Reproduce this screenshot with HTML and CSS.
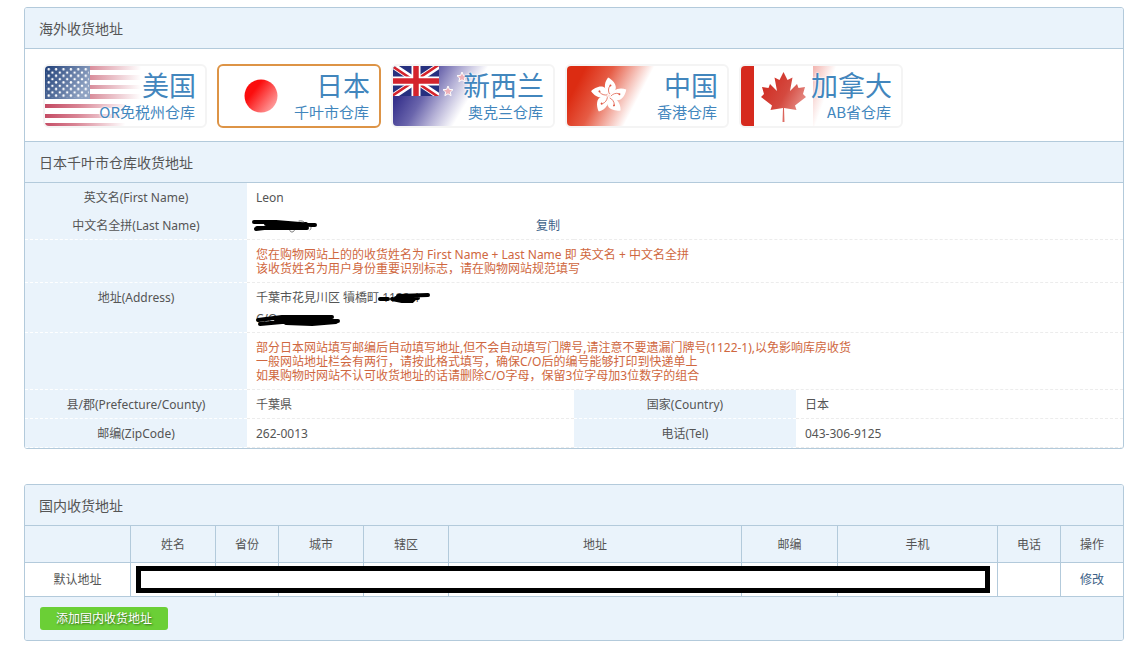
FILE: index.html
```html
<!DOCTYPE html>
<html lang="zh-CN">
<head>
    <meta charset="UTF-8">
    <meta name="viewport" content="width=device-width, initial-scale=1.0">
    <title>收货地址</title>
    <link rel="stylesheet" href="styles.css">
</head>
<body>
    <!-- Overseas addresses -->
    <section class="panel">
        <h2 class="panel-title">海外收货地址</h2>

        <div class="warehouses">
            <button type="button" class="warehouse">
                <svg class="flag" viewBox="0 0 160 60" aria-hidden="true">
                    <defs>
                        <linearGradient id="usBlue" x1="0" y1="0" x2="1" y2="0.4">
                            <stop offset="0" stop-color="#1f3f78"/>
                            <stop offset="1" stop-color="#8fa2c2"/>
                        </linearGradient>
                        <linearGradient id="usRed" gradientUnits="userSpaceOnUse" x1="0" y1="45" x2="80" y2="60">
                            <stop offset="0" stop-color="#c44a63"/>
                            <stop offset="0.4" stop-color="#d98595"/>
                            <stop offset="1" stop-color="#fff"/>
                        </linearGradient>
                        <linearGradient id="usTop" gradientUnits="userSpaceOnUse" x1="45" y1="0" x2="96" y2="0">
                            <stop offset="0" stop-color="#d98d9b"/>
                            <stop offset="1" stop-color="#fff"/>
                        </linearGradient>
                        <pattern id="usStars" width="7.4" height="6.6" patternUnits="userSpaceOnUse">
                            <circle cx="3.7" cy="3.2" r="1.2" fill="#fff"/>
                            <circle cx="0" cy="0" r="1.2" fill="#fff"/>
                            <circle cx="7.4" cy="0" r="1.2" fill="#fff"/>
                            <circle cx="0" cy="6.6" r="1.2" fill="#fff"/>
                            <circle cx="7.4" cy="6.6" r="1.2" fill="#fff"/>
                        </pattern>
                    </defs>
                    <path fill="url(#usTop)" d="M45 0H96V4H45zM45 9H96V14H45zM45 19H96V23H45zM45 28H96V33H45z"/>
                    <path fill="url(#usRed)" d="M0 38H96V42H0zM0 48H96V52H0zM0 57H96V60H0z"/>
                    <path fill="url(#usBlue)" d="M0 0H45V33H0z"/>
                    <path fill="url(#usStars)" d="M1 2H44V32H1z"/>
                </svg>
                <span class="warehouse-text">
                    <span class="country">美国</span>
                    <span class="depot">OR免税州仓库</span>
                </span>
            </button>

            <button type="button" class="warehouse active">
                <svg class="flag" viewBox="0 0 160 60" aria-hidden="true">
                    <defs>
                        <linearGradient id="jpRed" x1="0.1" y1="0.2" x2="1" y2="0.9">
                            <stop offset="0.2" stop-color="#fb0d0d"/>
                            <stop offset="1" stop-color="#ffb3b3"/>
                        </linearGradient>
                    </defs>
                    <circle cx="42" cy="30" r="16.5" fill="url(#jpRed)"/>
                </svg>
                <span class="warehouse-text">
                    <span class="country">日本</span>
                    <span class="depot">千叶市仓库</span>
                </span>
            </button>

            <button type="button" class="warehouse">
                <svg class="flag" viewBox="0 0 160 60" aria-hidden="true">
                    <defs>
                        <linearGradient id="nzBlue" gradientUnits="userSpaceOnUse" x1="6" y1="28" x2="60" y2="60">
                            <stop offset="0" stop-color="#37328c"/>
                            <stop offset="0.35" stop-color="#6a65ac"/>
                            <stop offset="0.65" stop-color="#b3afd5"/>
                            <stop offset="1" stop-color="#fff"/>
                        </linearGradient>
                        <clipPath id="nzJack"><path d="M0 0H46V30H0z"/></clipPath>
                    </defs>
                    <path fill="url(#nzBlue)" d="M0 0H110V60H0z"/>
                    <g clip-path="url(#nzJack)">
                        <path fill="#26307f" d="M0 0H46V30H0z"/>
                        <path stroke="#fff" stroke-width="6" d="M-1 -1L47 31M47 -1L-1 31"/>
                        <path stroke="#d4232c" stroke-width="2.500" d="M-1 0L47 32M47 -2L-1 30"/>
                        <path stroke="#fff" stroke-width="9" d="M23 0V30M0 15H46"/>
                        <path stroke="#d4232c" stroke-width="5.500" d="M23 0V30M0 15H46"/>
                    </g>
                    <g fill="#efb0b8" stroke="#fff" stroke-width="1">
                        <path d="M55 20l1.400 3.400 3.600.3-2.700 2.400.8 3.600-3.100-1.900-3.100 1.900.8-3.600-2.700-2.400 3.600-.3z"/>
                        <path d="M69 6l1.400 3.400 3.600.3-2.700 2.400.8 3.600-3.100-1.900-3.100 1.900.8-3.600-2.700-2.400 3.600-.3z"/>
                    </g>
                </svg>
                <span class="warehouse-text">
                    <span class="country">新西兰</span>
                    <span class="depot">奥克兰仓库</span>
                </span>
            </button>

            <button type="button" class="warehouse">
                <svg class="flag" viewBox="0 0 160 60" aria-hidden="true">
                    <defs>
                        <linearGradient id="hkRed" gradientUnits="userSpaceOnUse" x1="12" y1="14" x2="66" y2="42">
                            <stop offset="0" stop-color="#dc2c12"/>
                            <stop offset="0.4" stop-color="#e65c45"/>
                            <stop offset="1" stop-color="#fff"/>
                        </linearGradient>
                        <g id="petal">
                            <path fill="#fff" d="M0 0C-6 -4 -9 -10 -6 -17.500C-2 -17 5 -13 4.500 -8C4 -5 1 -4 0 0z"/>
                            <path fill="none" stroke="#df5540" stroke-width="0.7" d="M0 -2C-2 -4 -3 -7 -2 -10"/>
                            <circle cx="-1.500" cy="-10.500" r="1" fill="#df5540"/>
                        </g>
                    </defs>
                    <path fill="url(#hkRed)" d="M0 0H100V60H0z"/>
                    <g transform="translate(42 30) rotate(16)">
                        <use href="#petal"/>
                        <use href="#petal" transform="rotate(72)"/>
                        <use href="#petal" transform="rotate(144)"/>
                        <use href="#petal" transform="rotate(216)"/>
                        <use href="#petal" transform="rotate(288)"/>
                    </g>
                </svg>
                <span class="warehouse-text">
                    <span class="country">中国</span>
                    <span class="depot">香港仓库</span>
                </span>
            </button>

            <button type="button" class="warehouse">
                <svg class="flag" viewBox="0 0 160 60" aria-hidden="true">
                    <defs>
                        <linearGradient id="caLeaf" x1="0" y1="0.2" x2="1" y2="0.8">
                            <stop offset="0" stop-color="#d02a20"/>
                            <stop offset="0.5" stop-color="#d4493f"/>
                            <stop offset="1" stop-color="#eba19b"/>
                        </linearGradient>
                        <linearGradient id="caSide" gradientUnits="userSpaceOnUse" x1="64" y1="0" x2="92" y2="10">
                            <stop offset="0" stop-color="#ee9a93"/>
                            <stop offset="1" stop-color="#fff"/>
                        </linearGradient>
                    </defs>
                    <path fill="#d62a1e" d="M0 0H13V60H0z"/>
                    <path fill="url(#caSide)" d="M72 0H110V60H72z"/>
                    <path fill="url(#caLeaf)" d="M42.500 6L38.500 14L33.500 11.500L36 25L29 18L27.500 22L21 21L23 28L20 31L31 39.500L29.500 44L42 42L41.500 56H43.500L43 42L55.500 44L54 39.500L65 31L62 28L64 21L57.500 22L56 18L49 25L51.500 11.500L46.500 14z"/>
                </svg>
                <span class="warehouse-text">
                    <span class="country">加拿大</span>
                    <span class="depot">AB省仓库</span>
                </span>
            </button>
        </div>

        <h2 class="panel-title sub-title">日本千叶市仓库收货地址</h2>

        <table class="details">
            <colgroup>
                <col class="label-col"><col><col class="label-col"><col>
            </colgroup>
            <tbody>
                <tr class="no-line">
                    <th scope="row">英文名(First Name)</th>
                    <td colspan="3">Leon</td>
                </tr>
                <tr>
                    <th scope="row">中文名全拼(Last Name)</th>
                    <td>
                        <div class="copy-row">
                            <span class="masked">
                                <svg class="scribble" width="66" height="14" viewBox="0 0 66 14" aria-hidden="true">
                                    <path class="trace" d="M40 9c-3 0-3 4 0 4s3-4 2-5M47 2c6-1 7 3 5 6M57 7c2 0 3 2 1 4"/>
                                    <path d="M2 3H24L60 6H63M4 10C20 8 40 6 50 7M5 9H35L55 9M14 5H48M20 8L54 5"/>
                                </svg>
                            </span>
                            <a href="#">复制</a>
                        </div>
                    </td>
                    <td colspan="2"></td>
                </tr>
                <tr>
                    <th></th>
                    <td colspan="3" class="note">您在购物网站上的的收货姓名为 First Name + Last Name 即 英文名 + 中文名全拼<br>该收货姓名为用户身份重要识别标志，请在购物网站规范填写</td>
                </tr>
                <tr>
                    <th scope="row">地址(Address)</th>
                    <td colspan="3" class="address">
                        <div>千葉市花見川区 犢橋町 <span class="masked">1122-1
                            <svg class="scribble" width="58" height="14" viewBox="0 0 58 14" aria-hidden="true">
                                <path d="M2 7H10M20 4L50 3M14 7L24 9H34L38 5M18 6H40"/>
                            </svg></span>
                        </div>
                        <div><span class="masked">C/O
                            <svg class="scribble" width="92" height="14" viewBox="0 0 92 14" aria-hidden="true">
                                <path d="M6 7L30 4H76M8 11L30 9L46 7L86 8M34 5L80 4M34 10L60 11L84 9M24 7H70M38 7L74 8"/>
                            </svg></span>
                        </div>
                    </td>
                </tr>
                <tr>
                    <th></th>
                    <td colspan="3" class="note">部分日本网站填写邮编后自动填写地址,但不会自动填写门牌号,请注意不要遗漏门牌号(1122-1),以免影响库房收货<br>一般网站地址栏会有两行，请按此格式填写，确保C/O后的编号能够打印到快递单上<br>如果购物时网站不认可收货地址的话请删除C/O字母，保留3位字母加3位数字的组合</td>
                </tr>
                <tr>
                    <th scope="row">县/郡(Prefecture/County)</th>
                    <td>千葉県</td>
                    <th scope="row">国家(Country)</th>
                    <td>日本</td>
                </tr>
                <tr>
                    <th scope="row">邮编(ZipCode)</th>
                    <td>262-0013</td>
                    <th scope="row">电话(Tel)</th>
                    <td>043-306-9125</td>
                </tr>
            </tbody>
        </table>
    </section>

    <!-- Domestic addresses -->
    <section class="panel">
        <h2 class="panel-title">国内收货地址</h2>

        <div class="list-wrap">
            <table class="list">
                <colgroup>
                    <col class="w-type"><col class="w-mid"><col class="w-small"><col class="w-mid"><col class="w-mid">
                    <col><col class="w-zip"><col class="w-mobile"><col class="w-small"><col class="w-action">
                </colgroup>
                <thead>
                    <tr>
                        <th></th>
                        <th>姓名</th>
                        <th>省份</th>
                        <th>城市</th>
                        <th>辖区</th>
                        <th>地址</th>
                        <th>邮编</th>
                        <th>手机</th>
                        <th>电话</th>
                        <th>操作</th>
                    </tr>
                </thead>
                <tbody>
                    <tr>
                        <td>默认地址</td>
                        <td></td>
                        <td></td>
                        <td></td>
                        <td></td>
                        <td></td>
                        <td></td>
                        <td></td>
                        <td></td>
                        <td><a href="#">修改</a></td>
                    </tr>
                </tbody>
            </table>
            <div class="cover"></div>
        </div>

        <div class="panel-footer">
            <button type="button" class="add-btn">添加国内收货地址</button>
        </div>
    </section>
</body>
</html>
```

FILE: styles.css
```css
* {
    margin: 0;
    padding: 0;
    box-sizing: border-box;
}

body {
    padding: 7px 12px 13px 24px;
    background: #fff;
    color: #555;
    font-family: "Noto Sans", "Noto Sans CJK SC", sans-serif;
    font-size: 12px;
    line-height: 20px;
}

a {
    color: #3c6188;
    text-decoration: none;
}

.panel {
    border: 1px solid #b3cadb;
    border-radius: 3px;
    overflow: hidden;
    margin-bottom: 35px;
}

.panel:last-child {
    margin-bottom: 0;
}

.panel-title {
    padding: 2px 14px 0;
    background: #eaf3fb;
    border-bottom: 1px solid #b3cadb;
    font-size: 14px;
    font-weight: normal;
    line-height: 38px;
}

.sub-title {
    border-top: 1px solid #b3cadb;
}

/* Warehouse tabs */
.warehouses {
    display: flex;
    gap: 10px;
    padding: 15px 18px 13px;
}

.warehouse {
    display: grid;
    width: 164px;
    height: 64px;
    border: 2px solid #f4f4f4;
    border-radius: 6px;
    overflow: hidden;
    background: #fff;
    color: #4286bd;
    cursor: pointer;
}

.warehouse.active {
    border-color: #dd9446;
}

.flag,
.warehouse-text {
    grid-area: 1 / 1;
}

.flag {
    display: block;
    width: 160px;
    height: 60px;
}

.warehouse-text {
    z-index: 1;
    padding: 6px 9px 0 0;
    text-align: right;
    text-shadow: 0 0 2px #fff, 0 0 2px #fff;
}

.country,
.depot {
    display: block;
}

.country {
    font-family: "Liberation Sans", "Noto Sans CJK SC", sans-serif;
    font-size: 27px;
    line-height: 31px;
}

.depot {
    padding-right: 1px;
    font-family: "Noto Sans CJK SC", sans-serif;
    font-size: 15px;
    line-height: 17px;
}

/* Address details */
table {
    width: 100%;
    table-layout: fixed;
    border-collapse: separate;
    border-spacing: 0;
}

th {
    font-weight: normal;
}

.label-col {
    width: 222px;
}

.details th,
.details td {
    padding: 5px 9px 3px;
    vertical-align: top;
    border-bottom: 1px dashed #ececec;
}

.details th {
    background: #eaf3fb;
    border-bottom-color: #fff;
    text-align: center;
}

.details td {
    text-align: left;
}

.details .no-line th,
.details .no-line td {
    border-bottom: none;
}

.details .note {
    padding: 8px 9px 6px;
    color: #cf6740;
    line-height: 14px;
}

.details .address {
    padding: 4px 9px 3px;
    line-height: 21px;
}

.copy-row {
    display: flex;
    justify-content: space-between;
    padding-right: 5px;
}

.masked {
    position: relative;
}

.scribble {
    position: absolute;
    left: -4px;
    top: 3px;
    fill: none;
    stroke: #000;
    stroke-width: 4;
    stroke-linecap: round;
    stroke-linejoin: round;
}

.scribble .trace {
    stroke: #777;
    stroke-width: 1;
}

/* Domestic list */
.list-wrap {
    position: relative;
}

.w-type {
    width: 106px;
}

.w-mid {
    width: 85px;
}

.w-small {
    width: 63px;
}

.w-action {
    width: 62px;
}

.w-zip {
    width: 96px;
}

.w-mobile {
    width: 160px;
}

.list th,
.list td {
    border-right: 1px solid #b3cadb;
    border-bottom: 1px solid #b3cadb;
    text-align: center;
}

.list th {
    height: 37px;
    padding-top: 2px;
    background: #eaf3fb;
}

.list td {
    height: 34px;
}

.list th:last-child,
.list td:last-child {
    border-right: none;
}

.cover {
    position: absolute;
    top: 40px;
    left: 111px;
    right: 133px;
    height: 27px;
    border: 5px solid #000;
    background: #fff;
}

.panel-footer {
    display: flex;
    padding: 10px 15px;
    background: #eaf3fb;
}

.add-btn {
    height: 23px;
    padding: 0 16px;
    border: none;
    border-radius: 3px;
    background: #6bcf36;
    color: #fff;
    font-family: inherit;
    font-size: 12px;
    line-height: 23px;
    text-shadow: 1px 1px 2px rgba(0, 0, 0, 0.5);
    cursor: pointer;
}
```
